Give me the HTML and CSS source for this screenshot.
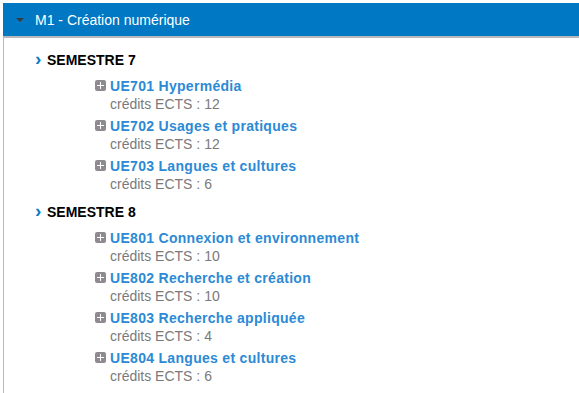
FILE: index.html
```html
<!DOCTYPE html>
<html lang="fr">
    <head>
        <meta charset="utf-8">
        <title>M1 - Création numérique</title>
        <link rel="stylesheet" href="styles.css">
    </head>
    <body>
        <div class="panel">
            <div class="panel-head">
                <span class="caret"></span>
                <span class="panel-title">M1 - Création numérique</span>
            </div>
            <div class="panel-body">
                <div class="semestre">
                    <h2 class="sem-title"><span class="chev">&rsaquo;</span>SEMESTRE 7</h2>
                    <ul class="ue-list">
                        <li class="ue"><span class="plus"></span><a href="#" class="ue-name">UE701 Hypermédia</a><div class="ects">crédits ECTS : 12</div></li>
                        <li class="ue"><span class="plus"></span><a href="#" class="ue-name">UE702 Usages et pratiques</a><div class="ects">crédits ECTS : 12</div></li>
                        <li class="ue"><span class="plus"></span><a href="#" class="ue-name">UE703 Langues et cultures</a><div class="ects">crédits ECTS : 6</div></li>
                    </ul>
                </div>
                <div class="semestre">
                    <h2 class="sem-title"><span class="chev">&rsaquo;</span>SEMESTRE 8</h2>
                    <ul class="ue-list">
                        <li class="ue"><span class="plus"></span><a href="#" class="ue-name">UE801 Connexion et environnement</a><div class="ects">crédits ECTS : 10</div></li>
                        <li class="ue"><span class="plus"></span><a href="#" class="ue-name">UE802 Recherche et création</a><div class="ects">crédits ECTS : 10</div></li>
                        <li class="ue"><span class="plus"></span><a href="#" class="ue-name">UE803 Recherche appliquée</a><div class="ects">crédits ECTS : 4</div></li>
                        <li class="ue"><span class="plus"></span><a href="#" class="ue-name">UE804 Langues et cultures</a><div class="ects">crédits ECTS : 6</div></li>
                    </ul>
                </div>
            </div>
        </div>
    </body>
</html>
```

FILE: styles.css
```css
html, body {
    margin: 0;
    font-family: "Liberation Sans", Arial, sans-serif;
    font-size: 14px;
    background: #fff;
}
.panel {
    margin: 3px 0 0 3px;
}
.panel-head {
    background: #0078c3;
    border-bottom: 2px solid #b8b8b8;
    height: 33px;
    display: flex;
    align-items: center;
    color: #fff;
}
.caret {
    width: 0;
    height: 0;
    border-left: 4px solid transparent;
    border-right: 4px solid transparent;
    border-top: 4px solid #3a3a3a;
    margin: 1px 0 0 13px;
}
.panel-title {
    font-size: 14px;
    margin-left: 11px;
}
.panel-body {
    border-left: 1px solid #b8b8b8;
    padding: 13px 0 10px 0;
}
.semestre {
    margin-bottom: 10px;
}
.sem-title {
    font-size: 14px;
    font-weight: bold;
    color: #000;
    margin: 0 0 8px 31px;
    line-height: 18px;
    display: flex;
    align-items: center;
}
.chev {
    color: #0a7cc2;
    font-size: 19px;
    font-weight: bold;
    width: 12px;
    line-height: 18px;
    margin-top: -3px;
}
.ue-list {
    list-style: none;
    margin: 0;
    padding: 0 0 0 91px;
}
.ue {
    position: relative;
    padding-left: 15px;
    margin-bottom: 4px;
    line-height: 18px;
}
.plus {
    position: absolute;
    left: 0;
    top: 3px;
    width: 11px;
    height: 11px;
    border-radius: 2px;
    background: #8e8a90;
}
.plus::before, .plus::after {
    content: "";
    position: absolute;
    background: #fff;
}
.plus::before {
    left: 2px;
    top: 5px;
    width: 7px;
    height: 1px;
}
.plus::after {
    left: 5px;
    top: 2px;
    width: 1px;
    height: 7px;
}
.ue-name {
    color: #2c8ad5;
    font-weight: bold;
    letter-spacing: 0.3px;
    text-decoration: none;
}
.ects {
    color: #7a7a7a;
}
```
